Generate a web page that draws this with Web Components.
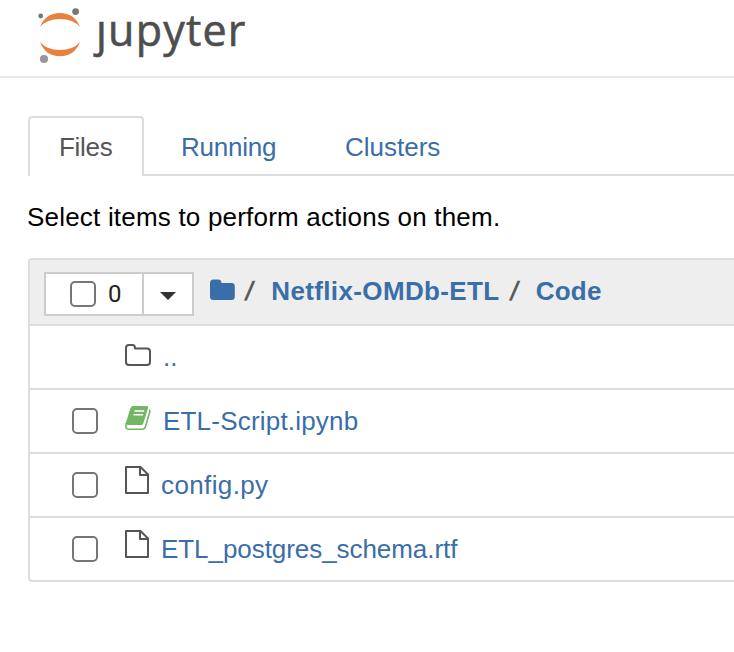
<!DOCTYPE html>
<html lang="en">
<head>
<meta charset="utf-8">
<title>Jupyter</title>
<style>
html,body{margin:0;background:#fff;overflow:hidden}
body{font:26px/30px "Liberation Sans",Arial,sans-serif;color:#000;width:734px;height:652px}
</style>
</head>
<body>
<jp-app></jp-app>
<script>
const define = (name, html, setup) => customElements.define(name, class extends HTMLElement {
  connectedCallback() {
    if (this.shadowRoot) return;
    const t = document.createElement('template');
    t.innerHTML = html;
    this.attachShadow({mode: 'open'}).append(t.content.cloneNode(true));
    if (setup) setup(this, this.shadowRoot);
  }
});

define('jp-logo', `<style>
:host{display:flex;align-items:flex-start;height:76px;padding-left:36px;border-bottom:2px solid #e7e7e7}
svg{display:block;flex:none;width:48px;height:70px}
.word{font:43px/60px "Open Sans","Noto Sans",sans-serif;color:#4e4e4e;-webkit-text-stroke:.6px #4e4e4e;letter-spacing:1.2px;white-space:nowrap;margin:0 0 0 12px;display:flex}
.j{clip-path:inset(20px -2px -8px -10px)}
</style>
<svg viewBox="36 0 48 70">
<path fill="#e8803f" d="M40 27Q45.500 13 60 13Q74.500 13 80 27Q73 19 60 19Q47 19 40 27ZM40 42Q45.500 56.200 60 56.200Q74.500 56.200 80 42Q73 50 60 50Q47 50 40 42Z"/>
<circle cx="40.700" cy="16" r="2.400" fill="#767677"/><circle cx="75.600" cy="11.600" r="3.400" fill="#767677"/><circle cx="44" cy="59" r="4.100" fill="#989798"/>
</svg><div class="word"><span class="j">j</span><span>upyter</span></div>`);

define('jp-tab', `<style>
:host{display:block;box-sizing:border-box;height:60px;padding:16px 31px 0 29px;border-bottom:2px solid #ddd;color:#3a6ea8;white-space:nowrap}
:host([active]){color:#555;border:2px solid #ddd;border-bottom:0;border-radius:4px 4px 0 0;padding:14px 29px 0}
span{letter-spacing:var(--ls,0)}
</style><span><slot></slot></span>`);

define('jp-tabs', `<style>
:host{display:flex;margin:38px 0 0 28px}
.rest{flex:1;border-bottom:2px solid #ddd}
.a{width:116px;flex:none;--ls:-.3px}.b{width:164px;padding-left:37px;padding-right:0;--ls:-.25px}.c{width:160px;padding-left:37px;padding-right:0}
</style><jp-tab class="a" active>Files</jp-tab><jp-tab class="b">Running</jp-tab><jp-tab class="c">Clusters</jp-tab><div class="rest"></div>`);

define('jp-checkbox', `<style>
:host{display:block;flex:none;box-sizing:border-box;width:26px;height:26px;border:2px solid #767676;border-radius:5px;background:#fff}
</style>`);

const icons = {
  home: '<path fill="#3a6ea8" d="M210 283q0-3.500 3.500-3.500h4.500q3.500 0 3.500 3.500h10q3.300 0 3.300 3.300V296.500q0 3.500-3.500 3.500h-17.800q-3.500 0-3.500-3.500z" transform="translate(-209 -276)"/>',
  folder: '<path fill="none" stroke="#555" stroke-width="2" stroke-linejoin="round" d="M2 16q0-3 3-3h3.500q2.500 0 2.500 3v.5h12q3 0 3 3v10.500q0 3-3 3h-18q-3 0-3-3z"/>',
  book: '<path fill="#74b566" d="M9.500 10h13q2.200 0 1.500 2.300l-4.700 15.200q-.5 1.500-2.200 1.500H5q-2 0-3.500-1L6.500 12q.8-2 3-2z"/><path d="M25.200 13.800q1.100.7.700 2L21.300 31q-.7 2.200-3 2.200H5Q1.800 33.200 1.900 30.200L2.200 27" fill="none" stroke="#74b566" stroke-width="1.600"/><path d="M10.500 15h9.700M9.500 18.700h9.700" stroke="#fff" stroke-width="1.500"/>',
  file: '<path fill="none" stroke="#555" stroke-width="2" stroke-linejoin="round" d="M2 7h14.500l7.500 7.500V33H2zM16 7v8h8"/>'
};
define('jp-icon', `<style>:host{display:block;flex:none;width:28px;height:40px}svg{display:block}</style><svg width="28" height="40" viewBox="0 0 28 40"></svg>`,
  (el, root) => { root.querySelector('svg').innerHTML = icons[el.getAttribute('name')]; });

define('jp-row', `<style>
:host{display:flex;height:62px;border-top:2px solid #ddd;align-items:flex-start}
.check{width:94px;flex:none;box-sizing:border-box;padding:18px 0 0 42px}
:host([parent]) jp-checkbox{display:none}
jp-icon{margin-top:6px}
.name{color:#3a6ea8;margin:16px 0 0 var(--gap,11px);letter-spacing:var(--ls,0);white-space:nowrap}
</style><div class="check"><jp-checkbox></jp-checkbox></div><jp-icon></jp-icon><span class="name"><slot></slot></span>`,
  (el, root) => {
    const old = root.querySelector('jp-icon');
    const i = document.createElement('jp-icon');
    i.setAttribute('name', el.getAttribute('icon'));
    old.replaceWith(i);
  });

define('jp-select', `<style>
:host{display:flex;flex:none;box-sizing:border-box;width:150px;height:44px;border:2px solid #ccc;background:#fff;color:#333}
.count{width:98px;box-sizing:border-box;display:flex;align-items:center;padding-left:24px;gap:12px;border-right:2px solid #ccc;font:24px/40px Roboto,sans-serif;color:#222}
.drop{flex:1;display:flex;align-items:center;justify-content:center}
i{border:8px solid transparent;border-top-color:#333;border-bottom:0;margin-top:3px}
</style><div class="count"><jp-checkbox></jp-checkbox><span>0</span></div><div class="drop"><i></i></div>`);

define('jp-breadcrumb', `<style>
:host{display:flex;height:64px;background:#eee;align-items:flex-start;border-radius:2px 0 0 0;padding-left:14px}
jp-select{margin-top:12px}
jp-icon{margin:16px 0 0 15px;height:30px;overflow:hidden}
b,span{margin-top:16px;white-space:nowrap}
b{color:#3a6ea8}
span{color:#555;-webkit-text-stroke:.7px #555;transform:skewX(-9deg)}
.s1{margin-left:9px}.n1{margin-left:18px;letter-spacing:.37px}.s2{margin-left:11px}.n2{margin-left:18px;letter-spacing:.2px}
</style><jp-select></jp-select><jp-icon name="home"></jp-icon><span class="s1">/</span><b class="n1">Netflix-OMDb-ETL</b><span class="s2">/</span><b class="n2">Code</b>`);

define('jp-list', `<style>
:host{display:block;margin:26px 0 0 28px;border:2px solid #ddd;border-right:0;border-radius:4px 0 0 4px}
</style><jp-breadcrumb></jp-breadcrumb><slot></slot>`);

define('jp-app', `<style>
:host{display:block}
p{margin:26px 0 0 27px;white-space:nowrap;letter-spacing:.2px}
</style>
<jp-logo></jp-logo><jp-tabs></jp-tabs><p>Select items to perform actions on them.</p>
<jp-list><jp-row parent icon="folder">..</jp-row><jp-row icon="book" style="--ls:.2px">ETL-Script.ipynb</jp-row><jp-row icon="file" style="--gap:9px;--ls:.38px">config.py</jp-row><jp-row icon="file" style="--gap:9px;--ls:-.06px">ETL_postgres_schema.rtf</jp-row></jp-list>`);
</script>
</body>
</html>
